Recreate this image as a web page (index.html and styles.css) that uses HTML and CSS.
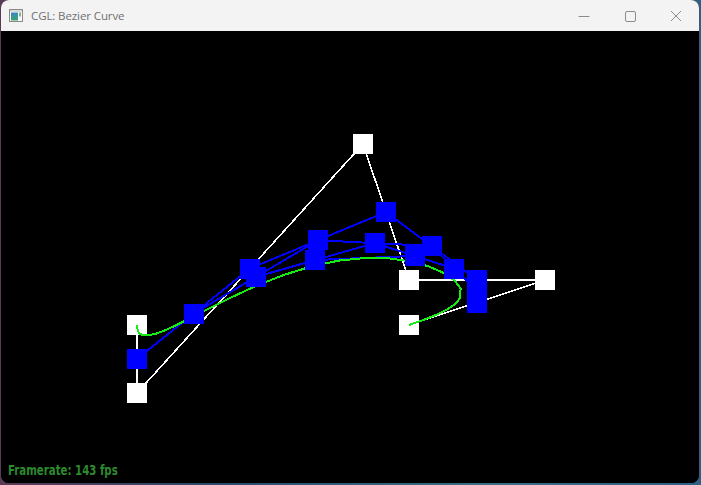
FILE: index.html
```html
<!DOCTYPE html>
<html>
<head>
<meta charset="utf-8">
<title>CGL: Bezier Curve</title>
<link rel="stylesheet" href="styles.css">
</head>
<body>
<div class="window">
  <div class="titlebar">
    <svg class="app-icon" width="14" height="13" viewBox="0 0 14 13">
      <defs>
        <linearGradient id="ig" x1="0" y1="0" x2="0" y2="1">
          <stop offset="0" stop-color="#3f86c9"/>
          <stop offset="1" stop-color="#3aa36a"/>
        </linearGradient>
      </defs>
      <rect x="0.5" y="0.5" width="13" height="12" fill="#fafafa" stroke="#8a8a8a"/>
      <rect x="1" y="1" width="12" height="2" fill="#d9d9d9"/>
      <rect x="2" y="3.5" width="7" height="8" fill="url(#ig)"/>
      <rect x="10" y="3.5" width="2" height="4" fill="#7fb77f"/>
    </svg>
    <span class="title">CGL: Bezier Curve</span>
    <div class="controls">
      <span class="ctl"><svg width="12" height="12" viewBox="0 0 12 12"><line x1="0.5" y1="6.5" x2="11.5" y2="6.5" stroke="#8c8c8c" stroke-width="1"/></svg></span>
      <span class="ctl"><svg width="12" height="12" viewBox="0 0 12 12"><rect x="1.5" y="1.5" width="10" height="10" rx="1.5" fill="none" stroke="#8c8c8c" stroke-width="1"/></svg></span>
      <span class="ctl"><svg width="12" height="12" viewBox="0 0 12 12"><path d="M1 1 L11 11 M11 1 L1 11" stroke="#8c8c8c" stroke-width="1"/></svg></span>
    </div>
  </div>
  <div class="canvas">
    <svg class="scene" width="698" height="452" viewBox="1 31 698 452">
      <g stroke="#ffffff" stroke-width="1.6" fill="none">
        <polyline points="137,325 137,393 363,144 409,280 545,280 409,325"/>
      </g>
      <g fill="#ffffff">
        <rect x="127" y="315" width="20" height="20"/>
        <rect x="127" y="383" width="20" height="20"/>
        <rect x="353" y="134" width="20" height="20"/>
        <rect x="399" y="270" width="20" height="20"/>
        <rect x="535" y="270" width="20" height="20"/>
        <rect x="399" y="315" width="20" height="20"/>
      </g>
      <g stroke="#0000ff" stroke-width="2" fill="none">
        <polyline points="137,359 250,268.5 386,212 477,280 477,302.5"/>
        <polyline points="193.5,313.75 318,240.25 431.5,246 477,291.25"/>
        <polyline points="255.75,277 374.75,243.1 454.25,268.6"/>
        <polyline points="315.25,260.06 414.5,255.9"/>
      </g>
      <polyline fill="none" stroke="#14ee14" stroke-width="2" stroke-linejoin="round"
        points="137,325 137.22,328.09 137.87,330.59 138.93,332.53 140.36,333.96 142.16,334.91 148.1,335.44 155.86,333.73 165.17,330.25 175.76,325.42 199.91,313.19 226.74,299.56 254.98,286.39 283.63,275 311.89,266.25 339.14,260.54 364.88,258 388.63,258.35 409.98,261.3 428.45,266.33 443.52,272.88 454.49,280.43 460.52,288.52 460.51,296.9 457.84,301.17 453.12,305.52 446.13,310.02 436.63,314.67 424.36,319.63 409,325"/>
      <g fill="#0000ff">
        <rect x="127" y="349" width="20" height="20"/>
        <rect x="240" y="258.5" width="20" height="20"/>
        <rect x="376" y="202" width="20" height="20"/>
        <rect x="467" y="270" width="20" height="20"/>
        <rect x="467" y="292.5" width="20" height="20"/>
        <rect x="183.5" y="303.75" width="20" height="20"/>
        <rect x="308" y="230.25" width="20" height="20"/>
        <rect x="421.5" y="236" width="20" height="20"/>
        <rect x="467" y="281.25" width="20" height="20"/>
        <rect x="245.75" y="267" width="20" height="20"/>
        <rect x="364.75" y="233.1" width="20" height="20"/>
        <rect x="444.25" y="258.6" width="20" height="20"/>
        <rect x="305.25" y="250.06" width="20" height="20"/>
        <rect x="404.5" y="245.9" width="20" height="20"/>
      </g>
    </svg>
    <div class="fps">Framerate: 143 fps</div>
  </div>
</div>
</body>
</html>
```

FILE: styles.css
```css
html, body {
  margin: 0;
  padding: 0;
}
body {
  width: 701px;
  height: 485px;
  background: linear-gradient(90deg, #5a3b55 0%, #2b4a6a 30%, #3c6f86 70%, #2f5f83 100%);
  overflow: hidden;
}
.window {
  margin: 0 2px 0 1px;
  width: 698px;
  height: 483px;
  border-radius: 8px;
  overflow: hidden;
  display: flex;
  flex-direction: column;
  background: #000;
}
.titlebar {
  height: 31px;
  flex: 0 0 31px;
  background: #f3f3f3;
  display: flex;
  align-items: center;
  font-family: "Open Sans", "Noto Sans", sans-serif;
  font-size: 11.5px;
  letter-spacing: -0.1px;
  color: #707070;
}
.app-icon {
  margin-left: 8px;
  margin-right: 8px;
  display: block;
}
.controls {
  margin-left: auto;
  display: flex;
  height: 31px;
}
.ctl {
  width: 46px;
  display: flex;
  align-items: center;
  justify-content: center;
}
.ctl svg {
  display: block;
}
.canvas {
  flex: 1;
  position: relative;
  background: #000;
}
.scene {
  display: block;
  shape-rendering: crispEdges;
}
.fps {
  position: absolute;
  left: 7px;
  bottom: 5px;
  font-family: "DejaVu Sans Condensed", "DejaVu Sans", sans-serif;
  font-stretch: condensed;
  font-weight: bold;
  font-size: 14px;
  color: #2d8a2d;
  transform: scaleX(0.81);
  transform-origin: left bottom;
  white-space: nowrap;
}
```
